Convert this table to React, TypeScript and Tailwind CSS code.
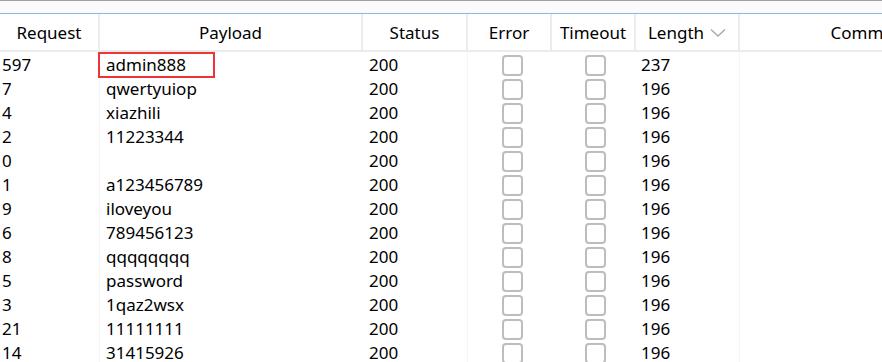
const rows = [
  { req: '597', payload: 'admin888', status: '200', length: '237', marked: true },
  { req: '7', payload: 'qwertyuiop', status: '200', length: '196' },
  { req: '4', payload: 'xiazhili', status: '200', length: '196' },
  { req: '2', payload: '11223344', status: '200', length: '196' },
  { req: '0', payload: '', status: '200', length: '196' },
  { req: '1', payload: 'a123456789', status: '200', length: '196' },
  { req: '9', payload: 'iloveyou', status: '200', length: '196' },
  { req: '6', payload: '789456123', status: '200', length: '196' },
  { req: '8', payload: 'qqqqqqqq', status: '200', length: '196' },
  { req: '5', payload: 'password', status: '200', length: '196' },
  { req: '3', payload: '1qaz2wsx', status: '200', length: '196' },
  { req: '21', payload: '11111111', status: '200', length: '196' },
  { req: '14', payload: '31415926', status: '200', length: '196' },
];

const cols = 'grid grid-cols-[100px_263px_105px_84px_84px_104px_260px]';

const Checkbox = () => (
  <div className="w-[21px] h-[21px] rounded-[4px] border-2 border-[#bdbdbd] bg-white" />
);

const HeaderCell = ({ children, last }: { children: React.ReactNode; last?: boolean }) => (
  <div
    className={`flex items-center justify-center h-full pt-[1px] ${last ? '' : 'border-r-2 border-[#ececec]'}`}
  >
    {children}
  </div>
);

export default function App() {
  return (
    <div
      className="w-[882px] h-[362px] overflow-hidden bg-white text-black text-[17px]"
      style={{ fontFamily: '"Noto Sans", "Noto Sans CJK SC", sans-serif' }}
    >
      {/* toolbar strip above the table */}
      <div className="h-[14px] bg-[#fafafa] border-t border-[#a0a0a0] border-b border-b-[#8fb6e0]" />

      {/* column headers */}
      <div className={`${cols} h-[38px] border-b-2 border-[#ebebeb]`}>
        <HeaderCell>Request</HeaderCell>
        <HeaderCell>Payload</HeaderCell>
        <HeaderCell>Status</HeaderCell>
        <HeaderCell>Error</HeaderCell>
        <HeaderCell>Timeout</HeaderCell>
        <HeaderCell>
          <span>Length</span>
          <svg width="16" height="10" viewBox="0 0 16 10" className="ml-[6px]">
            <path d="M1 1.5 L8 8 L15 1.5" fill="none" stroke="#a8a8a8" strokeWidth="1.4" />
          </svg>
        </HeaderCell>
        <HeaderCell last>Comment</HeaderCell>
      </div>

      {/* result rows */}
      <div>
        {rows.map((r) => (
          <div key={r.req} className={`${cols} h-[24px] leading-[26px]`}>
            <div className="pl-[2px] border-r border-[#f4f4f4]">{r.req}</div>
            <div className="relative pl-[6px]">
              {r.payload}
              {r.marked && (
                <div className="absolute left-[-2px] top-0 w-[117px] h-[26px] border-[2.5px] border-[#ee3339]" />
              )}
            </div>
            <div className="pl-[6px] border-r border-[#f4f4f4]">{r.status}</div>
            <div className="flex items-center justify-center pl-[4px]">
              <Checkbox />
            </div>
            <div className="flex items-center justify-center pl-[3px]">
              <Checkbox />
            </div>
            <div className="pl-[5px] border-r border-[#f4f4f4]">{r.length}</div>
            <div />
          </div>
        ))}
      </div>
    </div>
  );
}
